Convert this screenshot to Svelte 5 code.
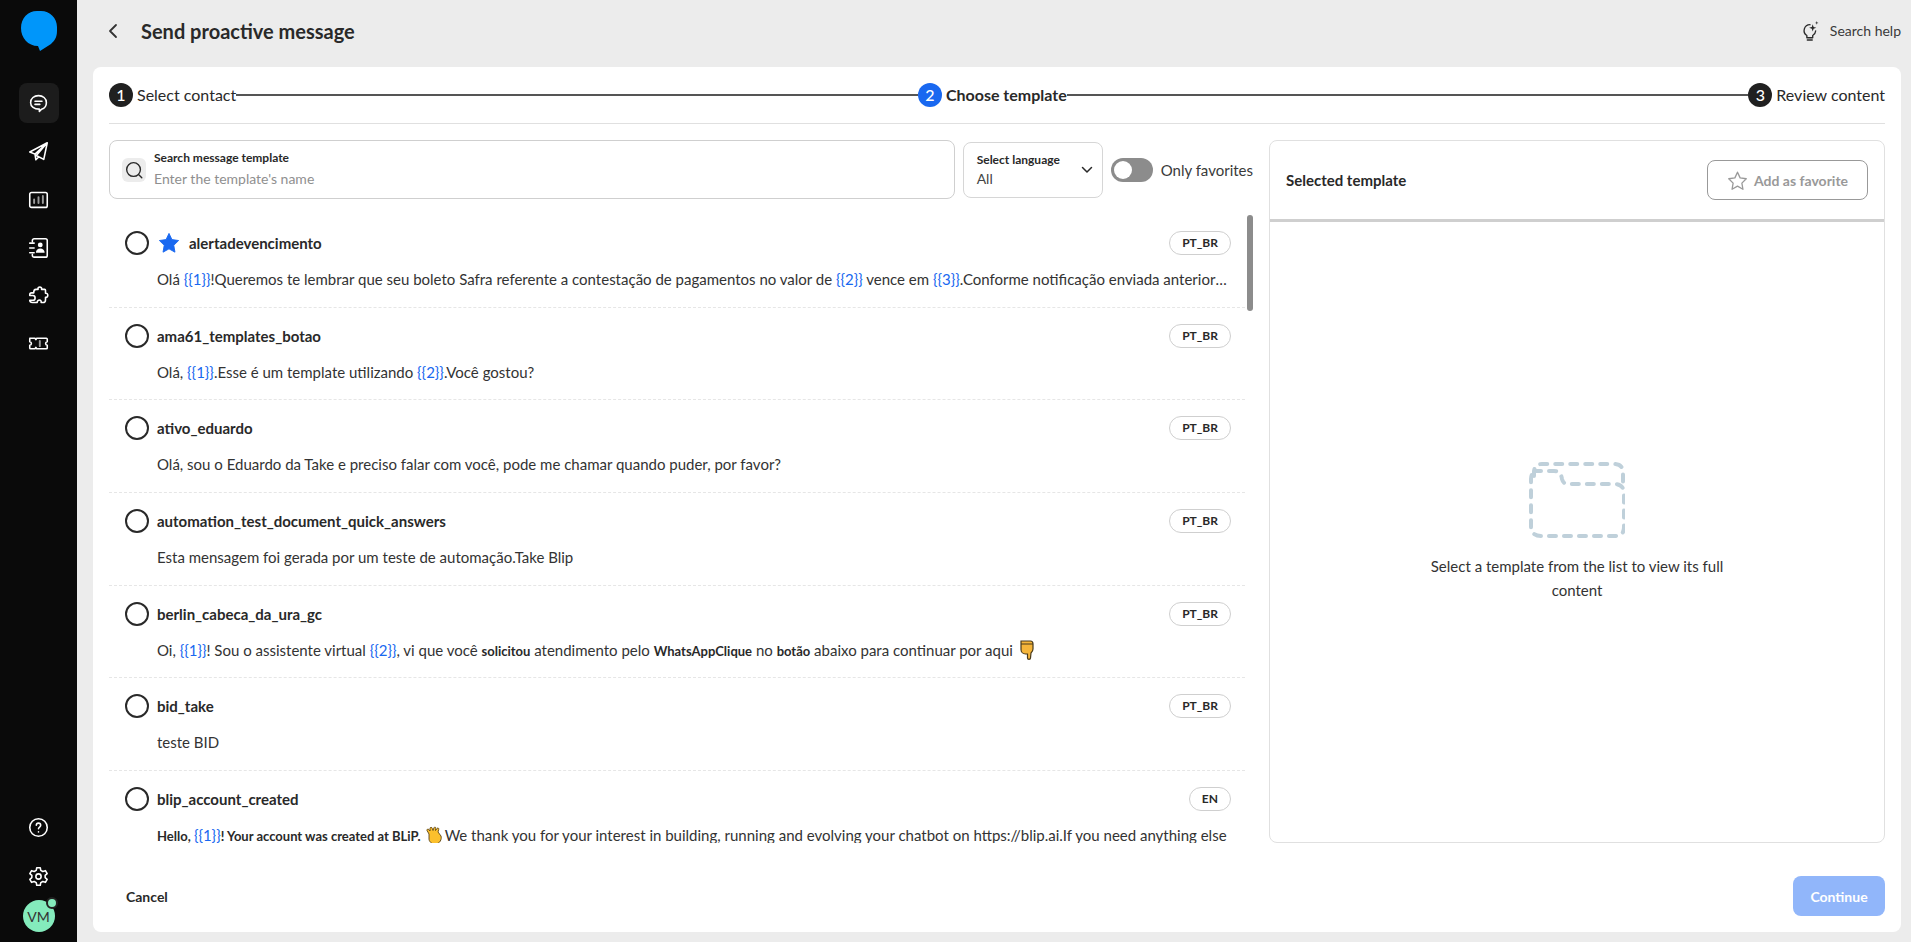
<script>
  const V = (t) => ({ k: 'v', t });
  const T = (t) => ({ k: 't', t });
  const B = (t) => ({ k: 'b', t });
  const E = (t) => ({ k: t });
  const rows = [
    { name: 'alertadevencimento', star: true, lang: 'PT_BR', body: [T('Olá '), V('{{1}}'), T('!Queremos te lembrar que seu boleto Safra referente a contestação de pagamentos no valor de '), V('{{2}}'), T(' vence em '), V('{{3}}'), T('.Conforme notificação enviada anteriormente por nossa equipe')] },
    { name: 'ama61_templates_botao', lang: 'PT_BR', body: [T('Olá, '), V('{{1}}'), T('.Esse é um template utilizando '), V('{{2}}'), T('.Você gostou?')] },
    { name: 'ativo_eduardo', lang: 'PT_BR', body: [T('Olá, sou o Eduardo da Take e preciso falar com você, pode me chamar quando puder, por favor?')] },
    { name: 'automation_test_document_quick_answers', lang: 'PT_BR', body: [T('Esta mensagem foi gerada por um teste de automação.Take Blip')] },
    { name: 'berlin_cabeca_da_ura_gc', lang: 'PT_BR', body: [T('Oi, '), V('{{1}}'), T('! Sou o assistente virtual '), V('{{2}}'), T(', vi que você '), B('solicitou'), T(' atendimento pelo '), B('WhatsAppClique'), T(' no '), B('botão'), T(' abaixo para continuar por aqui '), E('hand')] },
    { name: 'bid_take', lang: 'PT_BR', body: [T('teste BID')] },
    { name: 'blip_account_created', lang: 'EN', body: [B('Hello, '), V('{{1}}'), B('! Your account was created at BLiP. '), E('clap'), T('We thank you for your interest in building, running and evolving your chatbot on https://blip.ai.If you need anything else')] }
  ];
</script>

<div class="app">
  <nav class="rail">
    <svg class="logo" viewBox="0 0 36 40" aria-hidden="true"><path d="M16 0h4c9 0 16 7 16 16v4c0 7-3 10-6 13l-11 7-2-5C7 35 0 27 0 17 0 7 7 0 16 0z" fill="#0096fa"/></svg>
    <div class="navlist">
      <span class="nav active"><svg viewBox="0 0 24 24"><path d="M12 3c5 0 9 3 9 8 0 4-2.500 6.500-5.500 7.500L13 21v-2.600C7 18.500 3 15.500 3 11c0-5 4-8 9-8z"/><path d="M8 9.500h8M8 13h5.500"/></svg></span>
      <span class="nav"><svg viewBox="0 0 24 24"><path d="M22 2 2 12.500l6 2.500L22 2zM22 2l-4 19-8.500-4.500L22 2zM8 15l1 6.500 3.500-3.500"/></svg></span>
      <span class="nav"><svg viewBox="0 0 24 24"><rect x="2" y="4" width="20" height="17" rx="2"/><path class="dim" d="M7 16v-4M12 16V9.500M17 16V8"/></svg></span>
      <span class="nav"><svg viewBox="0 0 24 24"><path d="M5 5V4a2 2 0 0 1 2-2h13a2 2 0 0 1 2 2v17a2 2 0 0 1-2 2H7a2 2 0 0 1-2-2v-1M2 7h5M2 12.500h5M2 18h5"/><circle class="solid" cx="14" cy="9" r="2.800"/><path class="solid" d="M9 18c0-3 2-5 5-5s5 2 5 5z"/></svg></span>
      <span class="nav"><svg viewBox="0 0 24 24"><path d="M9 5h2.500c-1-3.500 5-3.500 4 0H19a1 1 0 0 1 1 1v3.500c3.500-1 3.500 5.500 0 4.500v3c0 2-1 3-3 3h-2c1-3.500-4.500-4-4.500 0H5c-2 0-3-1-3-2.500h3.500c3.500 0 3.500-5.500 0-5.500H2V11c0-1 1-2 2-2h2.500C6.500 7 7.500 5 9 5z"/></svg></span>
      <span class="nav"><svg viewBox="0 0 24 24"><path d="M2 6h6l1 1.500L10 6h11c.6 0 1 .4 1 1v3c-2.500.3-2.500 3.700 0 4v3c0 .6-.4 1-1 1H10l-1-1.500L8 18H3c-.6 0-1-.4-1-1v-3c2.500-.3 2.500-3.700 0-4V7c0-.6.4-1 1-1z"/><path class="dim" d="M13.500 9v6"/></svg></span>
    </div>
    <div class="navbottom">
      <span class="nav"><svg viewBox="0 0 24 24"><circle cx="12" cy="12" r="10"/><path d="M9.500 9.500c0-3.300 5-3.300 5 0 0 2-2.500 2-2.500 4"/><path d="M12 16.800v.2"/></svg></span>
      <span class="nav"><svg viewBox="0 0 24 24"><circle cx="12" cy="12" r="3"/><path d="M10 2h4l.6 3 2.300 1.300 3-1 2 3.500-2.300 2v2.400l2.300 2-2 3.500-3-1-2.300 1.300-.6 3h-4l-.6-3-2.300-1.300-3 1-2-3.500 2.300-2v-2.400l-2.300-2 2-3.500 3 1L9.400 5z"/></svg></span>
      <div class="avatar">VM<i class="dot"></i></div>
    </div>
  </nav>

  <main class="main">
    <header class="top">
      <svg class="back" viewBox="0 0 12 16"><path d="M9 2 3 8l6 6"/></svg>
      <h1>Send proactive message</h1>
      <div class="help">
        <svg viewBox="0 0 20 22"><path d="M10 4a6.500 6.500 0 0 0-3.500 12v2.500h6.500V16a6.500 6.500 0 0 0 3.300-5M7 21h5.500"/><path class="fill" d="M13 3.500l1 3 3 1-3 1-1 3-1-3-3-1 3-1zM17.500 0l.5 1.500 1.500.5-1.500.5-.5 1.500-.5-1.500-1.500-.5 1.500-.5z"/></svg>
        <span>Search help</span>
      </div>
    </header>

    <section class="card">
      <div class="stepper">
        <span class="step"><b class="num">1</b><span>Select contact</span></span>
        <i class="line"></i>
        <span class="step current"><b class="num">2</b><span>Choose template</span></span>
        <i class="line"></i>
        <span class="step"><b class="num">3</b><span>Review content</span></span>
      </div>

      <div class="content">
        <div class="left">
          <div class="filters">
            <div class="search">
              <span class="sicon"><svg viewBox="0 0 24 24"><circle cx="11.500" cy="11.500" r="7.500"/><path d="m17.500 17.500 3 3"/></svg></span>
              <div class="stext">
                <label for="q">Search message template</label>
                <span id="q" class="ph">Enter the template's name</span>
              </div>
            </div>
            <div class="select">
              <div class="stext">
                <span class="lab">Select language</span>
                <span class="val">All</span>
              </div>
              <svg viewBox="0 0 12 8"><path d="m1.500 1.500 4.500 4.500 4.500-4.500"/></svg>
            </div>
            <span class="toggle"><i></i></span>
            <span class="onlyfav">Only favorites</span>
          </div>

          <div class="list">
            {#each rows as r}
              <article class="row">
                <div class="rowhead">
                  <span class="radio"></span>
                  {#if r.star}
                    <svg class="star" viewBox="0 0 24 24"><path d="M12 1.500l3.200 6.800 7.300 1-5.300 5.200 1.300 7.500-6.500-3.600L5.500 22l1.300-7.500L1.500 9.300l7.300-1z"/></svg>
                  {/if}
                  <span class="name">{r.name}</span>
                  <span class="pill">{r.lang}</span>
                </div>
                <p class="body">
                  {#each r.body as s}
                    {#if s.k === 'v'}<span class="var">{s.t}</span>
                    {:else if s.k === 'b'}<b>{s.t}</b>
                    {:else if s.k === 'hand'}<svg class="emoji" viewBox="0 0 18 20"><path d="M3 1h9.500c1.500 0 2.500 1 2.500 3v5c0 2-1 3-2 4l-.5 5c0 1.800-3 1.800-3 0v-4H7.500C5 14 3 12 3 9.500z" fill="#f5b53a" stroke="#4a3a1a" stroke-width="1.200"/><path d="M3 4h12" stroke="#4a3a1a" stroke-width="1"/></svg>
                    {:else if s.k === 'clap'}<svg class="emoji clap" viewBox="0 0 18 18"><path d="M4 8 2 4.500c-.5-1 1-2 1.800-1L5 5 5 2.500C5 1 7 1 7.200 2.300L8 4.500l1-2.800c.4-1 2-.6 1.800.6L10.500 4.500l1.500-2c.7-1 2.300-.2 1.700 1L13 6l3 4c1 3-1 8-6 8-4 0-6-3-6-5z" fill="#fbc02d" stroke="#5a4212" stroke-width=".9"/></svg>
                    {:else}{s.t}{/if}
                  {/each}
                </p>
              </article>
            {/each}
            <span class="thumb"></span>
          </div>
        </div>

        <aside class="panel">
          <div class="phead">
            <strong>Selected template</strong>
            <button class="fav" type="button">
              <svg viewBox="0 0 24 24"><path d="M12 2.500l3 6.500 7 1-5 5 1.200 7L12 18.500 5.800 22 7 15 2 10l7-1z"/></svg>
              Add as favorite
            </button>
          </div>
          <div class="empty">
            <svg class="folder" viewBox="0 0 96 76"><path d="M5 14V10c0-5 3-8 8-8h72c6 0 9 3 9 8v14M5 9h20c6 0 7 3 8 8 1 4 3 5 7 5h46c6 0 9 4 9 9v34c0 6-3 9-9 9H12c-6 0-10-3-10-9V17c0-4 2-7 5-8" /></svg>
            <p>Select a template from the list to view its full content</p>
          </div>
        </aside>
      </div>

      <footer class="foot">
        <button class="cancel" type="button">Cancel</button>
        <button class="cont" type="button">Continue</button>
      </footer>
    </section>
  </main>
</div>

<style>
  :global(body) { margin: 0; }
  * { box-sizing: border-box; }
  .app { display: flex; width: 1911px; height: 942px; overflow: hidden; background: #ececec; color: #292929; font-family: "Lato", "Open Sans", sans-serif; font-size: 15px; }
  .rail { width: 77px; flex: none; background: #0a0a0a; display: flex; flex-direction: column; align-items: center; padding: 11px 0 10px; }
  .logo { width: 36px; height: 40px; margin-left: 1px; }
  .navlist { display: flex; flex-direction: column; gap: 8px; margin-top: 32px; }
  .nav { width: 40px; height: 40px; display: flex; align-items: center; justify-content: center; border-radius: 8px; }
  .nav.active { background: #1c1c1c; }
  .nav svg { width: 21px; height: 21px; fill: none; stroke: #fff; stroke-width: 1.800; stroke-linejoin: round; stroke-linecap: round; }
  .nav svg .dim { stroke: #9a9a9a; stroke-width: 2.200; }
  .nav svg .solid { fill: #fff; stroke: none; }
  .navbottom { margin-top: auto; display: flex; flex-direction: column; align-items: center; gap: 9px; }
  .avatar { position: relative; width: 32px; height: 32px; border-radius: 50%; background: #84ebbc; color: #333; font-size: 14px; display: flex; align-items: center; justify-content: center; margin-top: -5px; }
  .dot { position: absolute; top: -3px; right: -3px; width: 12px; height: 12px; border-radius: 50%; background: #84ebbc; border: 2px solid #222; }

  .main { flex: 1; min-width: 0; display: flex; flex-direction: column; padding: 0 10px 10px 16px; }
  .top { height: 67px; flex: none; display: flex; align-items: center; padding: 0 0 6px 14px; }
  .back { width: 12px; height: 16px; fill: none; stroke: #333; stroke-width: 1.800; stroke-linecap: round; stroke-linejoin: round; }
  h1 { font-size: 20px; font-weight: 700; margin: 0 0 0 22px; color: #292929; }
  .help { margin-left: auto; display: flex; align-items: center; gap: 11px; font-size: 14px; color: #3a3a3a; }
  .help svg { width: 18px; height: 20px; fill: none; stroke: #292929; stroke-width: 1.500; stroke-linecap: round; stroke-linejoin: round; }
  .help svg .fill { fill: #292929; stroke: none; }

  .card { flex: 1; min-height: 0; background: #fff; border-radius: 8px; padding: 0 16px; display: flex; flex-direction: column; }
  .stepper { height: 57px; flex: none; display: flex; align-items: center; border-bottom: 1px solid #e0e0e0; padding-bottom: 1px; }
  .step { display: flex; align-items: center; gap: 4px; font-size: 16px; color: #292929; white-space: nowrap; }
  .num { width: 24px; height: 24px; border-radius: 50%; background: #202020; color: #fff; font-size: 16px; font-weight: 500; display: flex; align-items: center; justify-content: center; }
  .current { font-weight: 700; }
  .current .num { background: #1968f0; }
  .line { flex: 1; height: 2px; background: #555; }

  .content { flex: 1; min-height: 0; display: flex; gap: 16px; padding-top: 16px; }
  .left { width: 1144px; flex: none; display: flex; flex-direction: column; }
  .filters { height: 59px; flex: none; display: flex; align-items: center; gap: 8px; }
  .search { flex: 1; height: 59px; border: 1px solid #cfcfcf; border-radius: 8px; display: flex; align-items: center; gap: 8px; padding-left: 12px; }
  .sicon { width: 24px; height: 24px; background: #ececec; border-radius: 6px; display: flex; align-items: center; justify-content: center; }
  .sicon svg { width: 22px; height: 22px; fill: none; stroke: #292929; stroke-width: 1.500; stroke-linecap: round; }
  .stext { display: flex; flex-direction: column; gap: 3px; }
  .stext label, .lab { font-size: 12px; font-weight: 700; line-height: 16px; color: #292929; }
  .ph { font-size: 14px; line-height: 20px; color: #8f8f8f; }
  .select { width: 140px; height: 56px; border: 1px solid #d6d6d6; border-radius: 8px; display: flex; align-items: center; justify-content: space-between; padding: 0 9px 0 13px; }
  .select svg { width: 12px; height: 8px; fill: none; stroke: #292929; stroke-width: 1.500; stroke-linecap: round; stroke-linejoin: round; }
  .select .val { font-size: 14px; line-height: 18px; color: #454545; }
  .select .stext { gap: 2px; }
  .toggle { width: 42px; height: 24px; flex: none; border-radius: 12px; background: #8c8c8c; padding: 3px; }
  .toggle i { display: block; width: 18px; height: 18px; border-radius: 50%; background: #fff; }
  .onlyfav { font-size: 15px; color: #3a3a3a; white-space: nowrap; }

  .list { position: relative; flex: 1; min-height: 0; margin-top: 16px; overflow: hidden; }
  .thumb { position: absolute; top: 0; right: 0; width: 6px; height: 96px; background: #8c8c8c; border-radius: 3px; }
  .row { width: 1136px; height: 92.670px; padding: 16px 14px 0 16px; border-bottom: 1px dashed #e6e6e6; }
  .rowhead { display: flex; align-items: center; height: 24px; }
  .radio { width: 24px; height: 24px; flex: none; border: 2px solid #292929; border-radius: 50%; margin-right: 8px; }
  .star { width: 22px; height: 22px; flex: none; fill: #1968f0; stroke: #1968f0; stroke-linejoin: round; margin: 0 9px 0 1px; }
  .name { font-size: 15px; font-weight: 700; color: #292929; }
  .pill { margin-left: auto; height: 24px; padding: 0 12px; border: 1px solid #cfcfcf; border-radius: 12px; font-size: 12px; font-weight: 700; line-height: 22px; }
  .body { margin: 12px 0 0 32px; font-size: 15px; line-height: 24px; color: #333; white-space: nowrap; overflow: hidden; text-overflow: ellipsis; }
  .body b { font-size: 13px; color: #292929; }
  .var { color: #1968f0; }
  .emoji { width: 18px; height: 20px; vertical-align: -4px; margin-left: 1px; }
  .clap { width: 18px; height: 18px; vertical-align: -3px; margin: 0 2px 0 1px; }

  .panel { flex: 1; border: 1px solid #e0e0e0; border-radius: 8px; display: flex; flex-direction: column; }
  .phead { height: 81px; flex: none; border-bottom: 3px solid #cfcfcf; display: flex; align-items: center; justify-content: space-between; padding: 0 16px; }
  .phead strong { font-size: 15px; font-weight: 700; }
  .fav { width: 161px; height: 40px; background: #fff; border: 1px solid #999; border-radius: 8px; display: flex; align-items: center; justify-content: center; gap: 6px; color: #999; font: 700 14px "Lato", sans-serif; }
  .fav svg { width: 21px; height: 21px; fill: none; stroke: #999; stroke-width: 1.500; stroke-linejoin: round; }
  .empty { flex: 1; display: flex; flex-direction: column; align-items: center; justify-content: center; padding-bottom: 1px; }
  .folder { width: 96px; height: 76px; fill: none; stroke: #bfd0da; stroke-width: 4; stroke-linecap: round; stroke-dasharray: 7 8; }
  .empty p { margin: 16px 0 0; width: 330px; text-align: center; font-size: 15px; line-height: 24px; color: #333; }

  .foot { flex: none; height: 40px; margin: 33px 0 16px; display: flex; align-items: center; justify-content: space-between; }
  button { cursor: pointer; }
  .cancel { background: none; border: 0; padding: 0 0 0 17px; font: 700 14px "Lato", sans-serif; color: #292929; }
  .cont { width: 92px; height: 40px; border: 0; border-radius: 8px; background: #91b6fa; color: #fff; font: 700 14px "Lato", sans-serif; }
</style>
